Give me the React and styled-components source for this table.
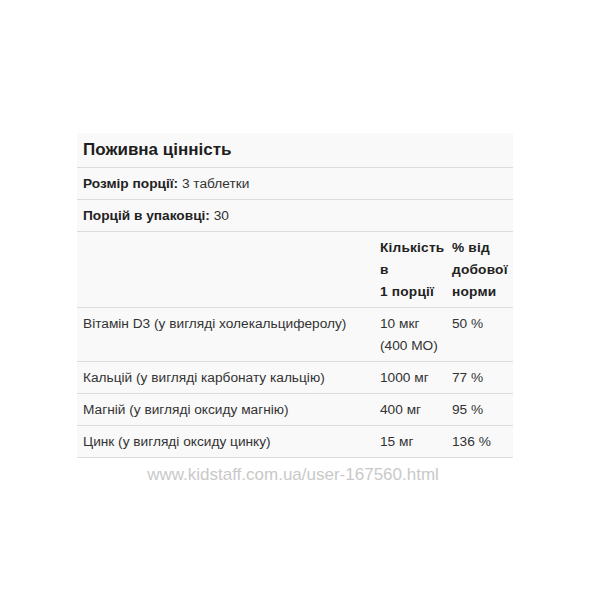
import styled, { createGlobalStyle } from 'styled-components'

const Global = createGlobalStyle`
  body {
    margin: 0;
    background: #fff;
    font-family: 'Liberation Sans', Arial, sans-serif;
  }
`

const rows = [
  { name: 'Вітамін D3 (у вигляді холекальциферолу)', amount: ['10 мкг', '(400 МО)'], pct: '50 %' },
  { name: 'Кальцій (у вигляді карбонату кальцію)', amount: ['1000 мг'], pct: '77 %' },
  { name: 'Магній (у вигляді оксиду магнію)', amount: ['400 мг'], pct: '95 %' },
  { name: 'Цинк (у вигляді оксиду цинку)', amount: ['15 мг'], pct: '136 %' },
]

function App() {
  return (
    <Page>
      <Global />
      <Table>
        <colgroup>
          <Col $w={297} />
          <Col $w={72} />
          <Col $w={67} />
        </colgroup>
        <tbody>
          <tr>
            <Title colSpan={3}>Поживна цінність</Title>
          </tr>
          <tr>
            <Cell colSpan={3}><b>Розмір порції:</b> 3 таблетки</Cell>
          </tr>
          <tr>
            <Cell colSpan={3}><b>Порцій в упаковці:</b> 30</Cell>
          </tr>
          <tr>
            <Cell />
            <Head>Кількість<br />в<br />1 порції</Head>
            <Head>% від<br />добової<br />норми</Head>
          </tr>
          {rows.map((r) => (
            <tr key={r.name}>
              <Cell>{r.name}</Cell>
              <Cell>{r.amount.map((a, i) => <div key={i}>{a}</div>)}</Cell>
              <Cell>{r.pct}</Cell>
            </tr>
          ))}
        </tbody>
      </Table>
      <Watermark>www.kidstaff.com.ua/user-167560.html</Watermark>
    </Page>
  )
}

export default App

const Page = styled.div`
  padding: 133px 0 0 77px;
  width: 436px;
`

const Table = styled.table`
  width: 436px;
  table-layout: fixed;
  border-collapse: collapse;
  background: #f9f9f9;
  color: #333;
  font-size: 13.7px;
  line-height: 22px;
  b { color: #222; }
  tr { border-bottom: 1px solid #dcdcdc; }
`

const Col = styled.col`
  width: ${(p) => p.$w}px;
`

const Title = styled.td`
  font-size: 17px;
  font-weight: bold;
  color: #1e1e1e;
  padding: 6px 6px 6px;
`

const Cell = styled.td`
  vertical-align: top;
  white-space: nowrap;
  padding: 5px 6px 4px;
`

const Head = styled(Cell)`
  font-weight: bold;
  color: #222;
  letter-spacing: 0.2px;
`

const Watermark = styled.div`
  margin-top: 7px;
  margin-left: -4px;
  text-align: center;
  font-size: 17px;
  color: #c9c9c9;
`
